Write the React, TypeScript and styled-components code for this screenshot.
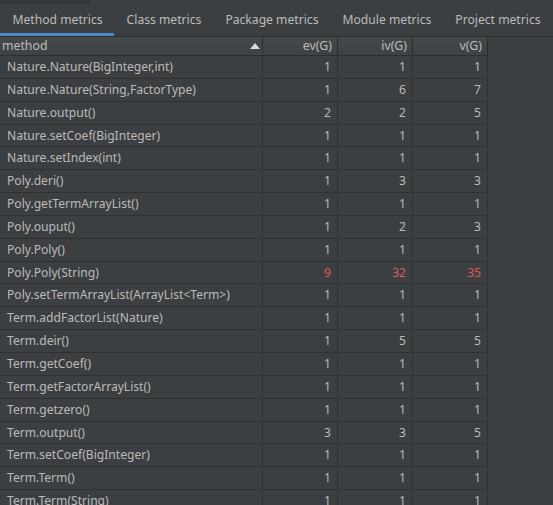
import React from "react";
import styled, { createGlobalStyle } from "styled-components";

const Global = createGlobalStyle`
  html, body { margin: 0; padding: 0; background: #3c3f41; overflow: hidden; }
  body { font-family: "Noto Sans", "Open Sans", sans-serif; }
`;

const Page = styled.div`
  width: 553px;
  height: 505px;
  background: #3c3f41;
  display: flex;
  flex-direction: column;
  overflow: hidden;
`;

const TopStrip = styled.div`
  height: 4px;
  flex: none;
  display: flex;
`;

const StripPart = styled.div<{ $w: number; $dark?: boolean }>`
  width: ${(p) => p.$w}px;
  background: ${(p) => (p.$dark ? "#333537" : "#3c3f41")};
`;

const TabBar = styled.div`
  height: 32px;
  flex: none;
  display: flex;
  align-items: stretch;
`;

const Tab = styled.div<{ $active?: boolean }>`
  padding: 1px 11.5px 0 12.5px;
  display: flex;
  align-items: center;
  font-size: 12.15px;
  color: #bbbbbb;
  border-bottom: 3px solid ${(p) => (p.$active ? "#4a88c7" : "transparent")};
  white-space: nowrap;
`;

const Table = styled.div`
  display: flex;
  flex-direction: column;
  border-top: 1px solid #2b2d2f;
`;

const cols = "263px 75px 75px 75px";

const HeaderRow = styled.div`
  display: grid;
  grid-template-columns: ${cols};
  height: 18px;
  background: linear-gradient(#46494b, #3f4244);
  border-bottom: 1px solid #2b2d2f;
  width: 488px;
`;

const HeaderCell = styled.div<{ $right?: boolean }>`
  position: relative;
  border-right: 1px solid #2b2d2f;
  font-size: 12.3px;
  line-height: 18px;
  color: #bbbbbb;
  text-align: ${(p) => (p.$right ? "right" : "left")};
  padding: ${(p) => (p.$right ? "0 5px 0 0" : "0 0 0 2px")};
  white-space: nowrap;
`;

const SortArrow = styled.svg`
  position: absolute;
  right: 2px;
  top: 6px;
`;

const Row = styled.div`
  display: grid;
  grid-template-columns: ${cols};
  height: 21.85px;
  border-bottom: 1px solid #2e3032;
  width: 488px;
  flex: none;
`;

const Cell = styled.div<{ $right?: boolean; $hot?: boolean }>`
  border-right: 1px solid #2e3032;
  font-size: 12.1px;
  line-height: 21.85px;
  color: ${(p) => (p.$hot ? "#de5d5d" : "#bbbbbb")};
  text-align: ${(p) => (p.$right ? "right" : "left")};
  padding: ${(p) => (p.$right ? "0 6px 0 0" : "0 0 0 7px")};
  white-space: nowrap;
  overflow: hidden;
`;

type R = [string, number, number, number];

const rows: R[] = [
  ["Nature.Nature(BigInteger,int)", 1, 1, 1],
  ["Nature.Nature(String,FactorType)", 1, 6, 7],
  ["Nature.output()", 2, 2, 5],
  ["Nature.setCoef(BigInteger)", 1, 1, 1],
  ["Nature.setIndex(int)", 1, 1, 1],
  ["Poly.deri()", 1, 3, 3],
  ["Poly.getTermArrayList()", 1, 1, 1],
  ["Poly.ouput()", 1, 2, 3],
  ["Poly.Poly()", 1, 1, 1],
  ["Poly.Poly(String)", 9, 32, 35],
  ["Poly.setTermArrayList(ArrayList<Term>)", 1, 1, 1],
  ["Term.addFactorList(Nature)", 1, 1, 1],
  ["Term.deir()", 1, 5, 5],
  ["Term.getCoef()", 1, 1, 1],
  ["Term.getFactorArrayList()", 1, 1, 1],
  ["Term.getzero()", 1, 1, 1],
  ["Term.output()", 3, 3, 5],
  ["Term.setCoef(BigInteger)", 1, 1, 1],
  ["Term.Term()", 1, 1, 1],
  ["Term.Term(String)", 1, 1, 1],
];

const tabs = ["Method metrics", "Class metrics", "Package metrics", "Module metrics", "Project metrics"];

export default function App() {
  return (
    <Page>
      <Global />
      <TopStrip>
        <StripPart $w={90} $dark />
        <StripPart $w={0} />
      </TopStrip>
      <TabBar>
        {tabs.map((t, i) => (
          <Tab key={t} $active={i === 0}>
            {t}
          </Tab>
        ))}
      </TabBar>
      <Table>
        <HeaderRow>
          <HeaderCell>
            method
            <SortArrow width="10" height="6" viewBox="0 0 10 6">
              <path d="M0 6 L5 0 L10 6 Z" fill="#d8d8d8" />
            </SortArrow>
          </HeaderCell>
          <HeaderCell $right>ev(G)</HeaderCell>
          <HeaderCell $right>iv(G)</HeaderCell>
          <HeaderCell $right>v(G)</HeaderCell>
        </HeaderRow>
        {rows.map(([name, ev, iv, v]) => (
          <Row key={name}>
            <Cell>{name}</Cell>
            <Cell $right $hot={ev > 4}>{ev}</Cell>
            <Cell $right $hot={iv > 10}>{iv}</Cell>
            <Cell $right $hot={v > 10}>{v}</Cell>
          </Row>
        ))}
      </Table>
    </Page>
  );
}
